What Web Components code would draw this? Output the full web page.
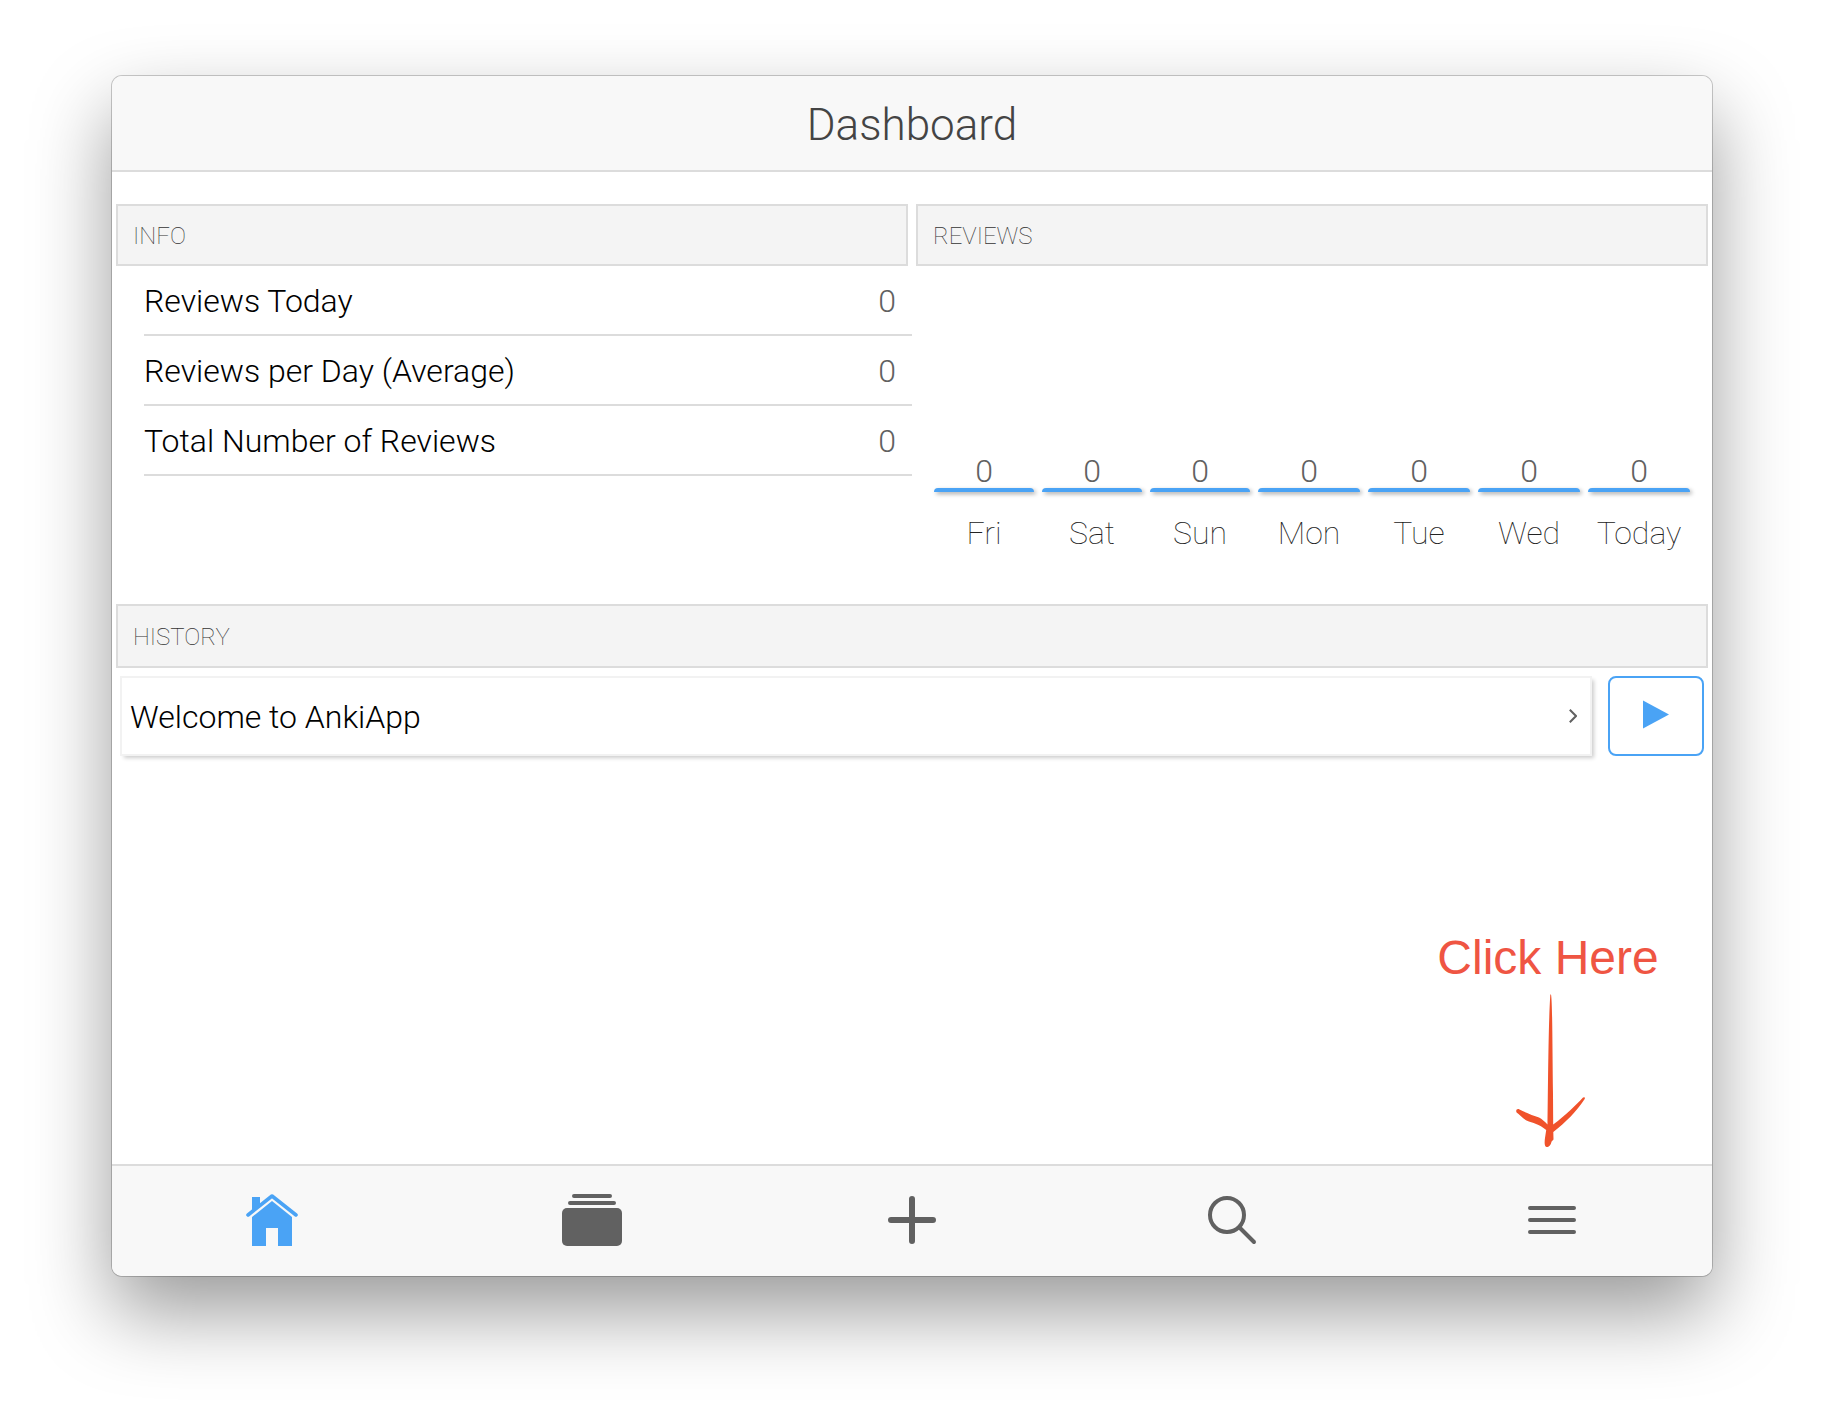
<!DOCTYPE html>
<html lang="en">
<head>
<meta charset="utf-8">
<title>Dashboard</title>
<style>
* {
    box-sizing: border-box;
}

body {
    margin: 0;
    min-height: 100vh;
    padding: 76px 112px 148px;
    display: flex;
    background: #fff;
    font-family: Roboto, "Liberation Sans", sans-serif;
    font-weight: 300;
    font-size: 32px;
    line-height: 34px;
    color: #000;
    --accent: #4aa3f5;
    --grey: #616161;
    --line: #dcdcdc;
    --bar: #f8f8f8;
}
</style>
</head>
<body>

<app-window>
  <span slot="title">Dashboard</span>
  <info-panel heading="INFO">
    <stat-table></stat-table>
  </info-panel>
  <info-panel heading="REVIEWS">
    <review-chart></review-chart>
  </info-panel>
  <info-panel heading="HISTORY" class="wide">
    <deck-row>Welcome to AnkiApp</deck-row>
  </info-panel>
  <click-hint slot="hint">Click Here</click-hint>
  <tab-bar slot="tabs"></tab-bar>
</app-window>

<script>
function define(name, html, setup) {
  const template = document.createElement("template");
  template.innerHTML = html;

  window.customElements.define(name, class extends HTMLElement {
    connectedCallback() {
      if (this.shadowRoot) return;
      this.attachShadow({ mode: "open" });
      this.shadowRoot.appendChild(template.content.cloneNode(true));
      if (setup) setup(this, this.shadowRoot);
    }
  });
}

define("app-window", `
<style>
:host {
    flex: 1;
    min-width: 0;
    display: flex;
    flex-direction: column;
    position: relative;
    background: #fff;
    border-radius: 10px;
    box-shadow: 0 0 0 1px rgba(0,0,0,.2), 0 36px 80px rgba(0,0,0,.4);
}

header {
    box-sizing: border-box;
    height: 96px;
    padding-top: 4px;
    display: flex;
    align-items: center;
    justify-content: center;
    background: var(--bar);
    border-bottom: 2px solid var(--line);
    border-radius: 10px 10px 0 0;
}

h1 {
    margin: 0;
    font-size: 44px;
    line-height: 52px;
    font-weight: 300;
    color: #444;
}

main {
    flex: 1;
    padding-top: 32px;
    display: grid;
    grid-template-columns: 1fr 1fr;
    align-content: start;
}

::slotted(.wide) {
    grid-column: 1 / -1;
    --head: 64px;
}
</style>
<header><h1><slot name="title"></slot></h1></header>
<main><slot></slot></main>
<slot name="hint"></slot>
<slot name="tabs"></slot>
`);

define("info-panel", `
<style>
:host {
    display: block;
    min-width: 0;
}

h2 {
    box-sizing: border-box;
    height: var(--head, 62px);
    margin: 0 4px;
    padding: 2px 15px 0;
    display: flex;
    align-items: center;
    background: #f4f4f4;
    border: 2px solid var(--line);
    font-size: 24px;
    line-height: 28px;
    font-weight: 100;
    color: #333;
}
</style>
<h2></h2>
<slot></slot>
`, (host, root) => {
  root.querySelector("h2").textContent = host.getAttribute("heading");
});

define("stat-table", `
<style>
:host {
    display: block;
    padding-left: 32px;
}

table {
    width: 100%;
    border-collapse: separate;
    border-spacing: 0;
}

th, td {
    box-sizing: border-box;
    height: 70px;
    padding: 2px 0 0;
    border-bottom: 2px solid var(--line);
    font-weight: 300;
    text-align: left;
}

td {
    padding-right: 16px;
    text-align: right;
    color: var(--grey);
}
</style>
<table>
  <tr><th scope="row">Reviews Today</th><td>0</td></tr>
  <tr><th scope="row">Reviews per Day (Average)</th><td>0</td></tr>
  <tr><th scope="row">Total Number of Reviews</th><td>0</td></tr>
</table>
`);

define("review-chart", `
<style>
:host {
    display: block;
    padding: 0 22px 54px;
}

ul {
    list-style: none;
    margin: 0;
    padding: 0;
    display: grid;
    grid-template-columns: repeat(3, 50fr) repeat(4, 51fr);
    gap: 8px;
}

li {
    display: flex;
    flex-direction: column;
    text-align: center;
}

.value {
    height: 222px;
    display: flex;
    align-items: flex-end;
    justify-content: center;
    color: var(--grey);
}

.bar {
    height: 4px;
    margin-bottom: 24px;
    background: var(--accent);
    border-radius: 4px 4px 0 0;
    box-shadow: 2px 2px 4px rgba(0,0,0,.35);
}

.day {
    font-weight: 100;
    color: #222;
}
</style>
<ul></ul>
`, (host, root) => {
  const days = ["Fri", "Sat", "Sun", "Mon", "Tue", "Wed", "Today"];
  root.querySelector("ul").innerHTML = days.map(day =>
    `<li><span class="value">0</span><span class="bar"></span><span class="day">${day}</span></li>`
  ).join("");
});

define("deck-row", `
<style>
:host {
    display: flex;
    gap: 16px;
    padding: 8px;
}

a {
    flex: 1;
    box-sizing: border-box;
    height: 80px;
    padding: 2px 13px 0 8px;
    display: flex;
    align-items: center;
    justify-content: space-between;
    border: 2px solid #f2f2f2;
    box-shadow: 3px 3px 4px -1px rgba(0,0,0,.2);
    color: #000;
    text-decoration: none;
}

button {
    width: 96px;
    height: 80px;
    padding: 0;
    display: flex;
    align-items: center;
    justify-content: center;
    background: #fff;
    border: 2px solid var(--accent);
    border-radius: 8px;
}
</style>
<a href="#deck">
  <slot></slot>
  <svg width="8" height="16" viewBox="0 0 8 16" fill="none" stroke="#616161" stroke-width="2"><path d="M.8 .8 7 7 .8 13.2"/></svg>
</a>
<button type="button" aria-label="Play">
  <svg width="26" height="32" viewBox="0 0 26 32" fill="#4aa3f5"><path d="M0 .5V28.500L26 14.500z"/></svg>
</button>
`);

// sits over the empty part of the page, pointing at the menu tab
define("click-hint", `
<style>
:host {
    position: absolute;
    right: calc(10% + 4px);
    bottom: 129px;
    width: 0;
    display: flex;
    flex-direction: column;
    align-items: center;
    font-family: "Liberation Sans", Arial, sans-serif;
    font-size: 48px;
    line-height: 56px;
    font-weight: 400;
    white-space: nowrap;
    color: #ef5543;
    pointer-events: none;
}

svg {
    flex: none;
    margin: 8px 0 0 8px;
}
</style>
<slot></slot>
<svg width="72" height="153" viewBox="0 0 72 153" fill="#f0522b">
  <path d="M34.300 1Q34.700-.5 35.100 1C36.500 10 36.400 60 37 100L37.200 130.500C50 121 60 111 67 103.500Q69.500 102.500 68.700 105C60 118 50 128 37.300 138L37.500 145.500 35.600 147.500C34.500 152 32.500 153.300 30.500 153C28 152.500 28.600 147 29 144L30.200 136C23 130 17 129 10.500 126.500C6.500 124.500 3 120 .6 118.500C-.6 116.500 1 114.200 3.500 115.500C9 118.500 17 121.500 23 123.500C26 125 28.500 127.500 31.500 130.500C32 100 32.300 30 34.300 1Z"/>
</svg>
`);

define("tab-bar", `
<style>
:host {
    display: block;
    background: var(--bar);
    border-top: 2px solid var(--line);
    border-radius: 0 0 10px 10px;
}

nav {
    display: grid;
    grid-template-columns: repeat(5, 1fr);
}

button {
    height: 110px;
    padding: 0;
    display: flex;
    align-items: center;
    justify-content: center;
    background: none;
    border: 0;
    color: var(--grey);
}

button.active {
    color: var(--accent);
}

svg {
    fill: none;
    stroke: currentColor;
    stroke-width: 4;
    stroke-linecap: round;
    overflow: visible;
}

.solid {
    fill: currentColor;
    stroke: none;
}
</style>
<nav>
  <button type="button" class="active" aria-label="Dashboard">
    <svg width="64" height="54" viewBox="0 0 64 54">
      <path d="M8 21 32 2 56 21" stroke-width="3.600" stroke-linejoin="round"/>
      <path class="solid" d="M12 3h8v8l-8 6zM32 7 52 23V52H38V34H26V52H12V23z"/>
    </svg>
  </button>
  <button type="button" aria-label="Decks">
    <svg width="64" height="54" viewBox="0 0 64 54">
      <path d="M14 2H50M10 9H54"/>
      <rect class="solid" x="2" y="14" width="60" height="38" rx="5"/>
    </svg>
  </button>
  <button type="button" aria-label="Add">
    <svg width="64" height="54" viewBox="0 0 64 54">
      <path d="M11 26H53M32 5V47" stroke-width="6"/>
    </svg>
  </button>
  <button type="button" aria-label="Search">
    <svg width="64" height="54" viewBox="0 0 64 54">
      <circle cx="27" cy="21" r="17"/>
      <path d="M40 34 54 48"/>
    </svg>
  </button>
  <button type="button" aria-label="Menu">
    <svg width="64" height="54" viewBox="0 0 64 54">
      <path d="M10 14H54M10 26H54M10 38H54"/>
    </svg>
  </button>
</nav>
`);
</script>
</body>
</html>
